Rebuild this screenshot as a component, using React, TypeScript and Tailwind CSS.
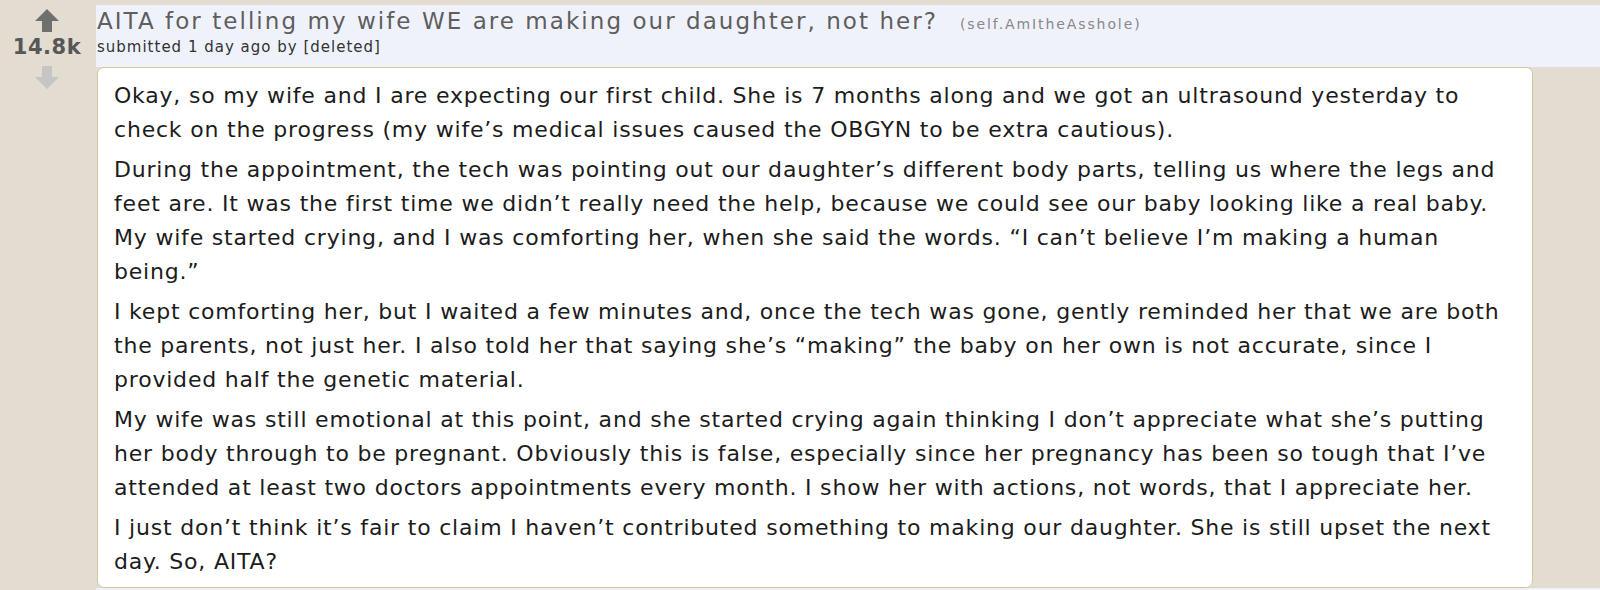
import React from 'react'

const paragraphs: string[][] = [
  [
    'Okay, so my wife and I are expecting our first child. She is 7 months along and we got an ultrasound yesterday to',
    'check on the progress (my wife\u2019s medical issues caused the OBGYN to be extra cautious).',
  ],
  [
    'During the appointment, the tech was pointing out our daughter\u2019s different body parts, telling us where the legs and',
    'feet are. It was the first time we didn\u2019t really need the help, because we could see our baby looking like a real baby.',
    'My wife started crying, and I was comforting her, when she said the words. \u201cI can\u2019t believe I\u2019m making a human',
    'being.\u201d',
  ],
  [
    'I kept comforting her, but I waited a few minutes and, once the tech was gone, gently reminded her that we are both',
    'the parents, not just her. I also told her that saying she\u2019s \u201cmaking\u201d the baby on her own is not accurate, since I',
    'provided half the genetic material.',
  ],
  [
    'My wife was still emotional at this point, and she started crying again thinking I don\u2019t appreciate what she\u2019s putting',
    'her body through to be pregnant. Obviously this is false, especially since her pregnancy has been so tough that I\u2019ve',
    'attended at least two doctors appointments every month. I show her with actions, not words, that I appreciate her.',
  ],
  [
    'I just don\u2019t think it\u2019s fair to claim I haven\u2019t contributed something to making our daughter. She is still upset the next',
    'day. So, AITA?',
  ],
]

function UpArrow({ className }: { className: string }) {
  return (
    <svg viewBox="0 0 24 23" className={className} fill="currentColor">
      <path d="M12 0 L24 12 L17 12 L17 23 L7 23 L7 12 L0 12 Z" />
    </svg>
  )
}

function DownArrow({ className }: { className: string }) {
  return (
    <svg viewBox="0 0 24 23" className={className} fill="currentColor">
      <path d="M7 0 L17 0 L17 11 L24 11 L12 23 L0 11 L7 11 Z" />
    </svg>
  )
}

export default function App() {
  return (
    <div
      className="min-h-screen bg-[#e3dcd1] pt-[5px] flex overflow-hidden"
      style={{ fontFamily: '"DejaVu Sans", Verdana, sans-serif' }}
    >
      {/* votes */}
      <div className="w-[96px] shrink-0 flex flex-col items-center pt-[4px]">
        <UpArrow className="w-[24px] h-[23px] text-[#6f6f6f] ml-[-2px]" />
        <div className="text-[21px] font-bold leading-[26px] tracking-[0.5px] text-[#575757] mt-[2px] ml-[-2px]">14.8k</div>
        <DownArrow className="w-[24px] h-[23px] text-[#c5c5c5] mt-[6px] ml-[-2px]" />
      </div>

      {/* entry */}
      <div className="flex-1 min-w-0">
        <div className="bg-[#eff2fb] h-[62px] pl-[1px]">
          <div className="flex items-baseline whitespace-nowrap">
            <span className="text-[23px] leading-[33px] tracking-[2.05px] text-[#5e5e5e]">
              AITA for telling my wife WE are making our daughter, not her?
            </span>
            <span className="text-[14px] tracking-[1.9px] text-[#888] ml-[22px]">(self.AmItheAsshole)</span>
          </div>
          <div className="text-[15px] leading-[20px] tracking-[1px] text-[#333] whitespace-nowrap mt-[-1px]">
            submitted 1 day ago by [deleted]
          </div>
        </div>

        <div className="w-[1436px] ml-[1px] bg-white border border-[#d3c7a1] rounded-[7px] pl-[16px] pt-[11px] pb-[8px] text-[#1c1c1c] text-[22px] leading-[34px] tracking-[0.8px]">
          {paragraphs.map((lines, i) => (
            <p key={i} className={i > 0 ? 'mt-[6px] whitespace-nowrap' : 'whitespace-nowrap'}>
              {lines.map((l, j) => (
                <React.Fragment key={j}>
                  {j > 0 && <br />}
                  {l}
                </React.Fragment>
              ))}
            </p>
          ))}
        </div>

        <div className="bg-[#eff2fb] h-[20px]" />
      </div>
    </div>
  )
}
